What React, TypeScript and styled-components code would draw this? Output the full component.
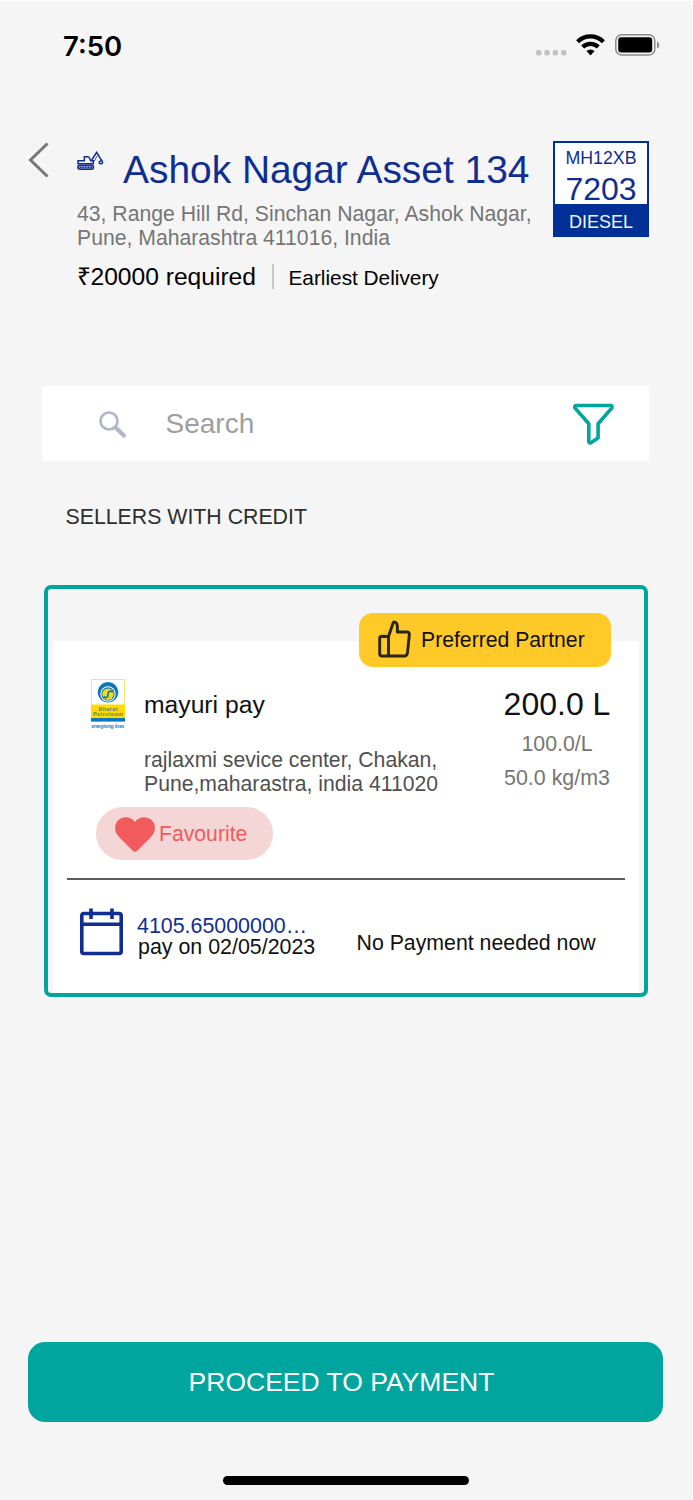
import React from "react";
import styled, { createGlobalStyle } from "styled-components";

const teal = "#00a59d";
const navy = "#102d92";

const GlobalStyle = createGlobalStyle`
  html, body { margin: 0; padding: 0; background: #f5f5f5; }
  *, *::before, *::after { box-sizing: border-box; }
  svg { display: block; flex: none; }
`;

const Screen = styled.div`
  width: 693px;
  height: 1500px;
  display: flex;
  flex-direction: column;
  overflow: hidden;
  background: #f5f5f5;
  border-top: 1px solid #fff;
  border-right: 1px solid #fff;
  font-family: "Liberation Sans", Arial, sans-serif;
  color: #111;
`;

const Text = styled.div<{ $size: number; $line: number; $color?: string; $track?: number }>`
  font-size: ${(p) => p.$size}px;
  line-height: ${(p) => p.$line}px;
  color: ${(p) => p.$color ?? "#111"};
  letter-spacing: ${(p) => p.$track ?? 0}px;
  white-space: nowrap;
`;

const StatusBar = styled.div`
  height: 140px;
  flex: none;
  display: flex;
  align-items: flex-start;
  justify-content: space-between;
  padding: 28px 32px 0 63px;
`;

const Clock = styled.div`
  font: 600 27.5px/34px Inter, sans-serif;
  color: #000;
`;

const StatusIcons = styled.div`
  display: flex;
  align-items: center;
  padding-top: 4px;
`;

const Header = styled.header`
  height: 245px;
  flex: none;
  display: flex;
  padding: 0 43px 0 28px;
`;

const BackButton = styled.button`
  width: 49px;
  padding: 0;
  border: 0;
  background: none;
  display: flex;
  align-items: flex-start;
`;

const HeaderInfo = styled.div`
  flex: 1;
  padding-top: 6px;
`;

const TitleRow = styled.div`
  display: flex;
  gap: 19px;
  margin-bottom: 8.6px;
`;

const ExcavatorSlot = styled.div`
  padding-top: 4px;
  width: 27px;
`;

const RequirementRow = styled.div`
  display: flex;
  height: 25px;
  margin-top: 13.4px;
  overflow: hidden;
`;

const Amount = styled(Text)`
  margin-left: -0.5px;
`;

const Divider = styled.div`
  width: 2px;
  height: 25px;
  margin: 0 14.5px 0 16px;
  background: #c9c9c9;
`;

const Plate = styled.div`
  width: 96px;
  height: 96px;
  flex: none;
  display: flex;
  flex-direction: column;
  align-items: center;
  border: 2px solid #002f95;
  background: #fff;
  padding-top: 3px;
`;

const PlateNumber = styled(Text)`
  margin-top: 5px;
`;

const PlateFuel = styled.div`
  align-self: stretch;
  flex: 1;
  display: flex;
  justify-content: center;
  background: #002f95;
  padding-top: 5px;
`;

const SearchBar = styled.div`
  display: flex;
  align-items: flex-start;
  flex: none;
  width: 607px;
  height: 75px;
  margin-left: 42px;
  background: #fff;
  padding: 17px 35px 0 57px;
`;

const SearchText = styled(Text)`
  flex: 1;
  margin-left: 38.5px;
  padding-top: 4px;
`;

const IconDrop = styled.div`
  padding-top: 8px;
`;

const SectionTitle = styled.div`
  margin: 43px 0 55px 65.5px;
`;

const Card = styled.section`
  position: relative;
  flex: none;
  width: 604px;
  height: 412px;
  margin-left: 44px;
  padding: 52px 5px 0;
  border: 4px solid ${teal};
  border-radius: 7px;
`;

const CardBody = styled.div`
  height: 352px;
  background: #fff;
  padding-top: 38px;
`;

const PartnerBadge = styled.div`
  position: absolute;
  top: 24px;
  right: 33px;
  width: 252px;
  height: 54px;
  border-radius: 14px;
  background: #ffca28;
  display: flex;
  align-items: center;
  gap: 10px;
  padding-left: 19px;
`;

const ThumbSlot = styled.div`
  margin-bottom: 3px;
`;

const SellerRow = styled.div`
  display: flex;
  height: 128px;
  padding: 0 28px 0 38px;
`;

const SellerInfo = styled.div`
  flex: 1;
  padding: 11px 0 0 19px;
`;

const SellerAddress = styled.div`
  margin-top: 27.6px;
`;

const Quantities = styled.div`
  width: 108px;
  display: flex;
  flex-direction: column;
  align-items: center;
  gap: 8px;
  padding-top: 6px;
`;

const FavouritePill = styled.div`
  width: 177px;
  height: 53px;
  margin-left: 43px;
  border-radius: 27px;
  background: #f4d6d7;
  display: flex;
  align-items: center;
  gap: 4px;
  padding-left: 19px;
`;

const HeartSlot = styled.div`
  padding-top: 2px;
`;

const Rule = styled.div`
  height: 2px;
  margin: 18px 14px 0 14px;
  background: #5c5c5c;
`;

const PaymentRow = styled.div`
  display: flex;
  align-items: flex-start;
  padding: 28px 0 0 27px;
`;

const DueInfo = styled.div`
  flex: none;
  width: 233.5px;
  padding: 7.6px 0 0 14px;
`;

const DueDate = styled(Text)`
  padding-left: 1px;
`;

const PaymentNote = styled.div`
  padding-top: 22px;
`;

const ProceedButton = styled.button`
  flex: none;
  width: 635px;
  height: 80px;
  margin: auto 0 54px 28px;
  padding: 0 8px 0 0;
  border: 0;
  border-radius: 17px;
  background: ${teal};
  font-family: inherit;
  display: flex;
  align-items: center;
  justify-content: center;
`;

const HomeIndicator = styled.div`
  flex: none;
  width: 246px;
  height: 9px;
  margin: 0 0 15px 223px;
  border-radius: 5px;
  background: #000;
`;

const CellularDots = () => (
  <svg width="40" height="24" viewBox="0 0 40 24" fill="#c2c2c2">
    <rect x="0" y="17" width="5.5" height="5.5" rx="2" />
    <rect x="8.3" y="17" width="5.5" height="5.5" rx="2" />
    <rect x="16.6" y="17" width="5.5" height="5.5" rx="2" />
    <rect x="25" y="17" width="5.5" height="5.5" rx="2" />
  </svg>
);

const WifiIcon = () => (
  <svg width="39" height="24" viewBox="0 0 39 24" fill="none" stroke="#000" strokeWidth="4.2">
    <path d="M1.6 8.8a18.2 18.2 0 0 1 25.8 0" />
    <path d="M6.7 14a11.2 11.2 0 0 1 15.6 0" />
    <path d="M10.4 18.1a6.2 6.2 0 0 1 8.2 0L14.5 22.6z" fill="#000" stroke="none" />
  </svg>
);

const BatteryIcon = () => (
  <svg width="45" height="22" viewBox="0 0 45 22">
    <rect x="0.8" y="0.8" width="39" height="20.2" rx="6" fill="none" stroke="#8b8b8b" strokeWidth="1.5" />
    <rect x="3.2" y="3.3" width="34" height="15.2" rx="3" fill="#000" />
    <path d="M42 7.5c3 1 3 6 0 7z" fill="#8b8b8b" />
  </svg>
);

const BackChevron = () => (
  <svg width="22" height="38" viewBox="0 0 22 38" fill="none" stroke="#777" strokeWidth="3">
    <path d="M19.5 2.5 2.5 19l17 16.5" />
  </svg>
);

const ExcavatorIcon = () => (
  <svg width="27" height="20" viewBox="0 0 81 60" fill="none" stroke={navy} strokeWidth="4.5">
    <path d="M3 38V29H22V17h10q5 0 7 7l2 5h8v9z" />
    <rect x="2.5" y="43" width="47" height="12" rx="6" fill="#8c9bcb" />
    <path d="M8 49h38" strokeWidth="4" strokeDasharray="5 3" />
    <path d="M44 27 59 4 74 29" />
    <path d="M51 31 61 14" strokeWidth="2.5" />
    <path d="M73 27c7 6 4 12-3 11-5-1-4-6 0-7z" />
  </svg>
);

const SearchIcon = () => (
  <svg width="28" height="28" viewBox="0 0 28 28" fill="none" stroke="#aeb8c7">
    <circle cx="10" cy="10" r="8.5" strokeWidth="2.7" />
    <path d="M16.5 16.5l9.7 9.2" strokeWidth="4.2" />
  </svg>
);

const FilterIcon = () => (
  <svg width="42" height="43" viewBox="0 0 42 43" fill="none" stroke={teal} strokeWidth="3.6" strokeLinejoin="round">
    <path d="M3.7 2.5H39.3Q40.5 3.5 39.7 5.1L26.1 20.7V34.7L18.9 39.9Q16.9 40.5 16.8 38.5V20.7L3.1 5.1Q2.3 3.5 3.7 2.5z" />
  </svg>
);

const ThumbIcon = () => (
  <svg width="33" height="38" viewBox="0 0 33 38" fill="none" stroke="#2a2410" strokeWidth="2.9" strokeLinejoin="round">
    <path d="M10.5 16.5 15 3.2c.6-1.8 3-1.4 3.8.6 1 2.800.7 5.700.5 8.200h9.700c2 0 2.500 1 2.300 3l-1.800 17.500c-.3 2.200-1.200 3.500-3 3.500H4c-1.700 0-2.300-.8-2.300-2.300V18.500c0-1.500.7-2.200 2.300-2.200z" />
    <path d="M10.5 16.5V36" />
  </svg>
);

const HeartIcon = () => (
  <svg width="40" height="35" viewBox="0 0 40 35" fill="#f15b5d">
    <path d="M20 34.8c-1 0-1.700-.5-2.500-1.300L4 20C-1.500 14-.8 6.500 3.500 2.900 8.500-1 16-.5 20 5 24-.5 31.500-1 36.500 2.900 40.800 6.500 41.500 14 36 20L22.500 33.500c-.8.8-1.500 1.300-2.500 1.300z" />
  </svg>
);

const CalendarIcon = () => (
  <svg width="43" height="48" viewBox="0 0 43 48" fill="none" stroke={navy} strokeWidth="3.6">
    <rect x="1.8" y="5.5" width="39.4" height="40" rx="2" />
    <path d="M2 16.3h39M11 0.5v10.5M32 0.5v10.5" />
  </svg>
);

const BharatLogo = () => (
  <svg width="34" height="50" viewBox="0 0 34 50" fontFamily="Liberation Sans, Arial, sans-serif" textAnchor="middle">
    <rect x="0.5" y="0.5" width="33" height="42" fill="#fff" stroke="#f7e67c" />
    <circle cx="17" cy="13.2" r="10.3" fill="#0c76bd" />
    <circle cx="17" cy="15" r="7.7" fill="#fff" />
    <circle cx="17" cy="15" r="6.7" fill="#0c76bd" />
    <circle cx="17" cy="15.2" r="5.7" fill="#f5dc14" />
    <path d="M12.5 17.5c3 2.5 4.5.5 4.5-2s1.5-4.500 4.800-2.500" fill="none" stroke="#0c76bd" strokeWidth="1.7" />
    <rect x="0" y="25.5" width="34" height="13.5" fill="#ffdb00" />
    <rect x="0" y="39" width="34" height="3.5" fill="#0c76bd" />
    <text x="17" y="31.7" fontSize="5.6" fontWeight="700" fill="#5f8760" textLength="19">Bharat</text>
    <text x="17" y="37" fontSize="5.6" fontWeight="700" fill="#5f8760" textLength="30">Petroleum</text>
    <text x="17" y="48.5" fontSize="4.8" fontWeight="700" fontStyle="italic" fill="#2a82c4" textLength="33">energising lives</text>
  </svg>
);

export default function App() {
  return (
    <Screen>
      <GlobalStyle />
      <StatusBar>
        <Clock>7:50</Clock>
        <StatusIcons>
          <CellularDots />
          <WifiIcon />
          <BatteryIcon />
        </StatusIcons>
      </StatusBar>

      <Header>
        <BackButton aria-label="Back">
          <BackChevron />
        </BackButton>
        <HeaderInfo>
          <TitleRow>
            <ExcavatorSlot>
              <ExcavatorIcon />
            </ExcavatorSlot>
            <Text $size={38.9} $line={46} $color={navy}>Ashok Nagar Asset 134</Text>
          </TitleRow>
          <Text $size={21.2} $line={24.3} $color="#757575">
            43, Range Hill Rd, Sinchan Nagar, Ashok Nagar,
            <br />
            Pune, Maharashtra 411016, India
          </Text>
          <RequirementRow>
            <Amount $size={24.6} $line={25} $color="#000">₹20000 required</Amount>
            <Divider />
            <Text $size={20.8} $line={27} $color="#000">Earliest Delivery</Text>
          </RequirementRow>
        </HeaderInfo>
        <Plate>
          <Text $size={17.8} $line={24} $color={navy}>MH12XB</Text>
          <PlateNumber $size={32} $line={29} $color={navy}>7203</PlateNumber>
          <PlateFuel>
            <Text $size={18} $line={27} $color="#f2f4fa">DIESEL</Text>
          </PlateFuel>
        </Plate>
      </Header>

      <SearchBar>
        <IconDrop>
          <SearchIcon />
        </IconDrop>
        <SearchText $size={28} $line={34} $color="#9e9e9e">Search</SearchText>
        <FilterIcon />
      </SearchBar>

      <SectionTitle>
        <Text $size={21.3} $line={26} $color="#2e2e2e">SELLERS WITH CREDIT</Text>
      </SectionTitle>

      <Card>
        <CardBody>
          <SellerRow>
            <BharatLogo />
            <SellerInfo>
              <Text $size={24.7} $line={30}>mayuri pay</Text>
              <SellerAddress>
                <Text $size={21.2} $line={24.5} $color="#4f4f4f">
                  rajlaxmi sevice center, Chakan,
                  <br />
                  Pune,maharastra, india 411020
                </Text>
              </SellerAddress>
            </SellerInfo>
            <Quantities>
              <Text $size={32} $line={38}>200.0 L</Text>
              <Text $size={21.3} $line={26} $color="#757575">100.0/L</Text>
              <Text $size={21.4} $line={26} $color="#757575">50.0 kg/m3</Text>
            </Quantities>
          </SellerRow>
          <FavouritePill>
            <HeartSlot>
              <HeartIcon />
            </HeartSlot>
            <Text $size={21.2} $line={26} $color="#f15b5d">Favourite</Text>
          </FavouritePill>
          <Rule />
          <PaymentRow>
            <CalendarIcon />
            <DueInfo>
              <Text $size={21.4} $line={21} $color={navy}>4105.65000000…</Text>
              <DueDate $size={21.4} $line={21}>pay on 02/05/2023</DueDate>
            </DueInfo>
            <PaymentNote>
              <Text $size={21.3} $line={26}>No Payment needed now</Text>
            </PaymentNote>
          </PaymentRow>
        </CardBody>
        <PartnerBadge>
          <ThumbSlot>
            <ThumbIcon />
          </ThumbSlot>
          <Text $size={21.2} $line={26}>Preferred Partner</Text>
        </PartnerBadge>
      </Card>

      <ProceedButton>
        <Text $size={26.5} $line={32} $color="#fff">PROCEED TO PAYMENT</Text>
      </ProceedButton>
      <HomeIndicator />
    </Screen>
  );
}
